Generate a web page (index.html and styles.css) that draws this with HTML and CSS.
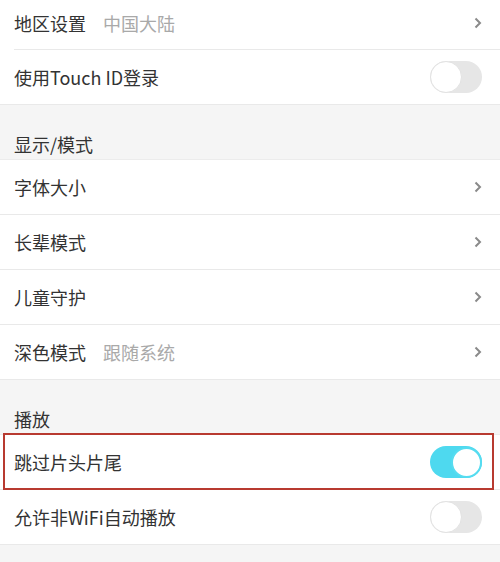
FILE: index.html
```html
<!DOCTYPE html>
<html lang="zh-CN">
<head>
<meta charset="utf-8">
<link rel="stylesheet" href="styles.css">
</head>
<body>
<div class="page">
  <div class="group first">
    <div class="row indent-sep">
      <span class="label">地区设置</span><span class="value">中国大陆</span>
      <svg class="chev" width="8" height="12" viewBox="0 0 8 12"><polyline points="1.5,1.5 6,6 1.5,10.5" fill="none" stroke="#8a8a8a" stroke-width="2"/></svg>
    </div>
    <div class="row">
      <span class="label">使用Touch ID登录</span>
      <span class="toggle"><span class="knob"></span></span>
    </div>
  </div>
  <div class="header">显示/模式</div>
  <div class="group">
    <div class="row">
      <span class="label">字体大小</span>
      <svg class="chev" width="8" height="12" viewBox="0 0 8 12"><polyline points="1.5,1.5 6,6 1.5,10.5" fill="none" stroke="#8a8a8a" stroke-width="2"/></svg>
    </div>
    <div class="row">
      <span class="label">长辈模式</span>
      <svg class="chev" width="8" height="12" viewBox="0 0 8 12"><polyline points="1.5,1.5 6,6 1.5,10.5" fill="none" stroke="#8a8a8a" stroke-width="2"/></svg>
    </div>
    <div class="row">
      <span class="label">儿童守护</span>
      <svg class="chev" width="8" height="12" viewBox="0 0 8 12"><polyline points="1.5,1.5 6,6 1.5,10.5" fill="none" stroke="#8a8a8a" stroke-width="2"/></svg>
    </div>
    <div class="row">
      <span class="label">深色模式</span><span class="value">跟随系统</span>
      <svg class="chev" width="8" height="12" viewBox="0 0 8 12"><polyline points="1.5,1.5 6,6 1.5,10.5" fill="none" stroke="#8a8a8a" stroke-width="2"/></svg>
    </div>
  </div>
  <div class="header">播放</div>
  <div class="group">
    <div class="row highlighted">
      <span class="label">跳过片头片尾</span>
      <span class="toggle on"><span class="knob"></span></span>
    </div>
    <div class="row">
      <span class="label">允许非WiFi自动播放</span>
      <span class="toggle"><span class="knob"></span></span>
    </div>
  </div>
</div>
</body>
</html>
```

FILE: styles.css
```css
* { box-sizing: border-box; }
html, body { margin: 0; padding: 0; }
body {
  background: #f5f5f5;
  font-family: "Noto Sans CJK SC", "Noto Sans", sans-serif;
  color: #333;
  width: 500px;
  height: 562px;
  overflow: hidden;
}
.page { display: flex; flex-direction: column; }
.group { background: #fff; display: flex; flex-direction: column; }
.group.first { margin-top: -5px; }
.row {
  height: 55px;
  display: flex;
  align-items: center;
  padding: 0 18px 0 14px;
  border-bottom: 1px solid #e9e9e9;
  font-size: 18px;
  line-height: 18px;
  position: relative;
}
.row.indent-sep { border-bottom: none; }
.row.indent-sep::before {
  content: "";
  position: absolute;
  left: 14px; right: 0; bottom: 0;
  height: 1px;
  background: #e9e9e9;
}
.label { color: #333; }
.value { color: #a9a9a9; margin-left: 17px; }
.chev { margin-left: auto; display: block; }
.header {
  height: 55px;
  display: flex;
  align-items: flex-end;
  padding: 0 14px 6px;
  font-size: 18px;
  line-height: 18px;
  color: #333;
  border-bottom: 1px solid #ececec;
}
.toggle {
  margin-left: auto;
  width: 52px;
  height: 32px;
  border-radius: 16px;
  background: #e6e6e6;
  display: flex;
  align-items: center;
  justify-content: flex-start;
}
.knob {
  width: 32px;
  height: 32px;
  border-radius: 50%;
  background: #fff;
  border: 1px solid #e2e2e2;
}
.toggle.on {
  background: #4ed9ef;
  justify-content: flex-end;
}
.toggle.on .knob { border: 2px solid #56dcf0; width: 31px; height: 31px; }
.highlighted::after {
  content: "";
  position: absolute;
  top: -2px;
  left: 3px;
  right: 6px;
  bottom: -1px;
  border: 2px solid #b83a30;
}
```
